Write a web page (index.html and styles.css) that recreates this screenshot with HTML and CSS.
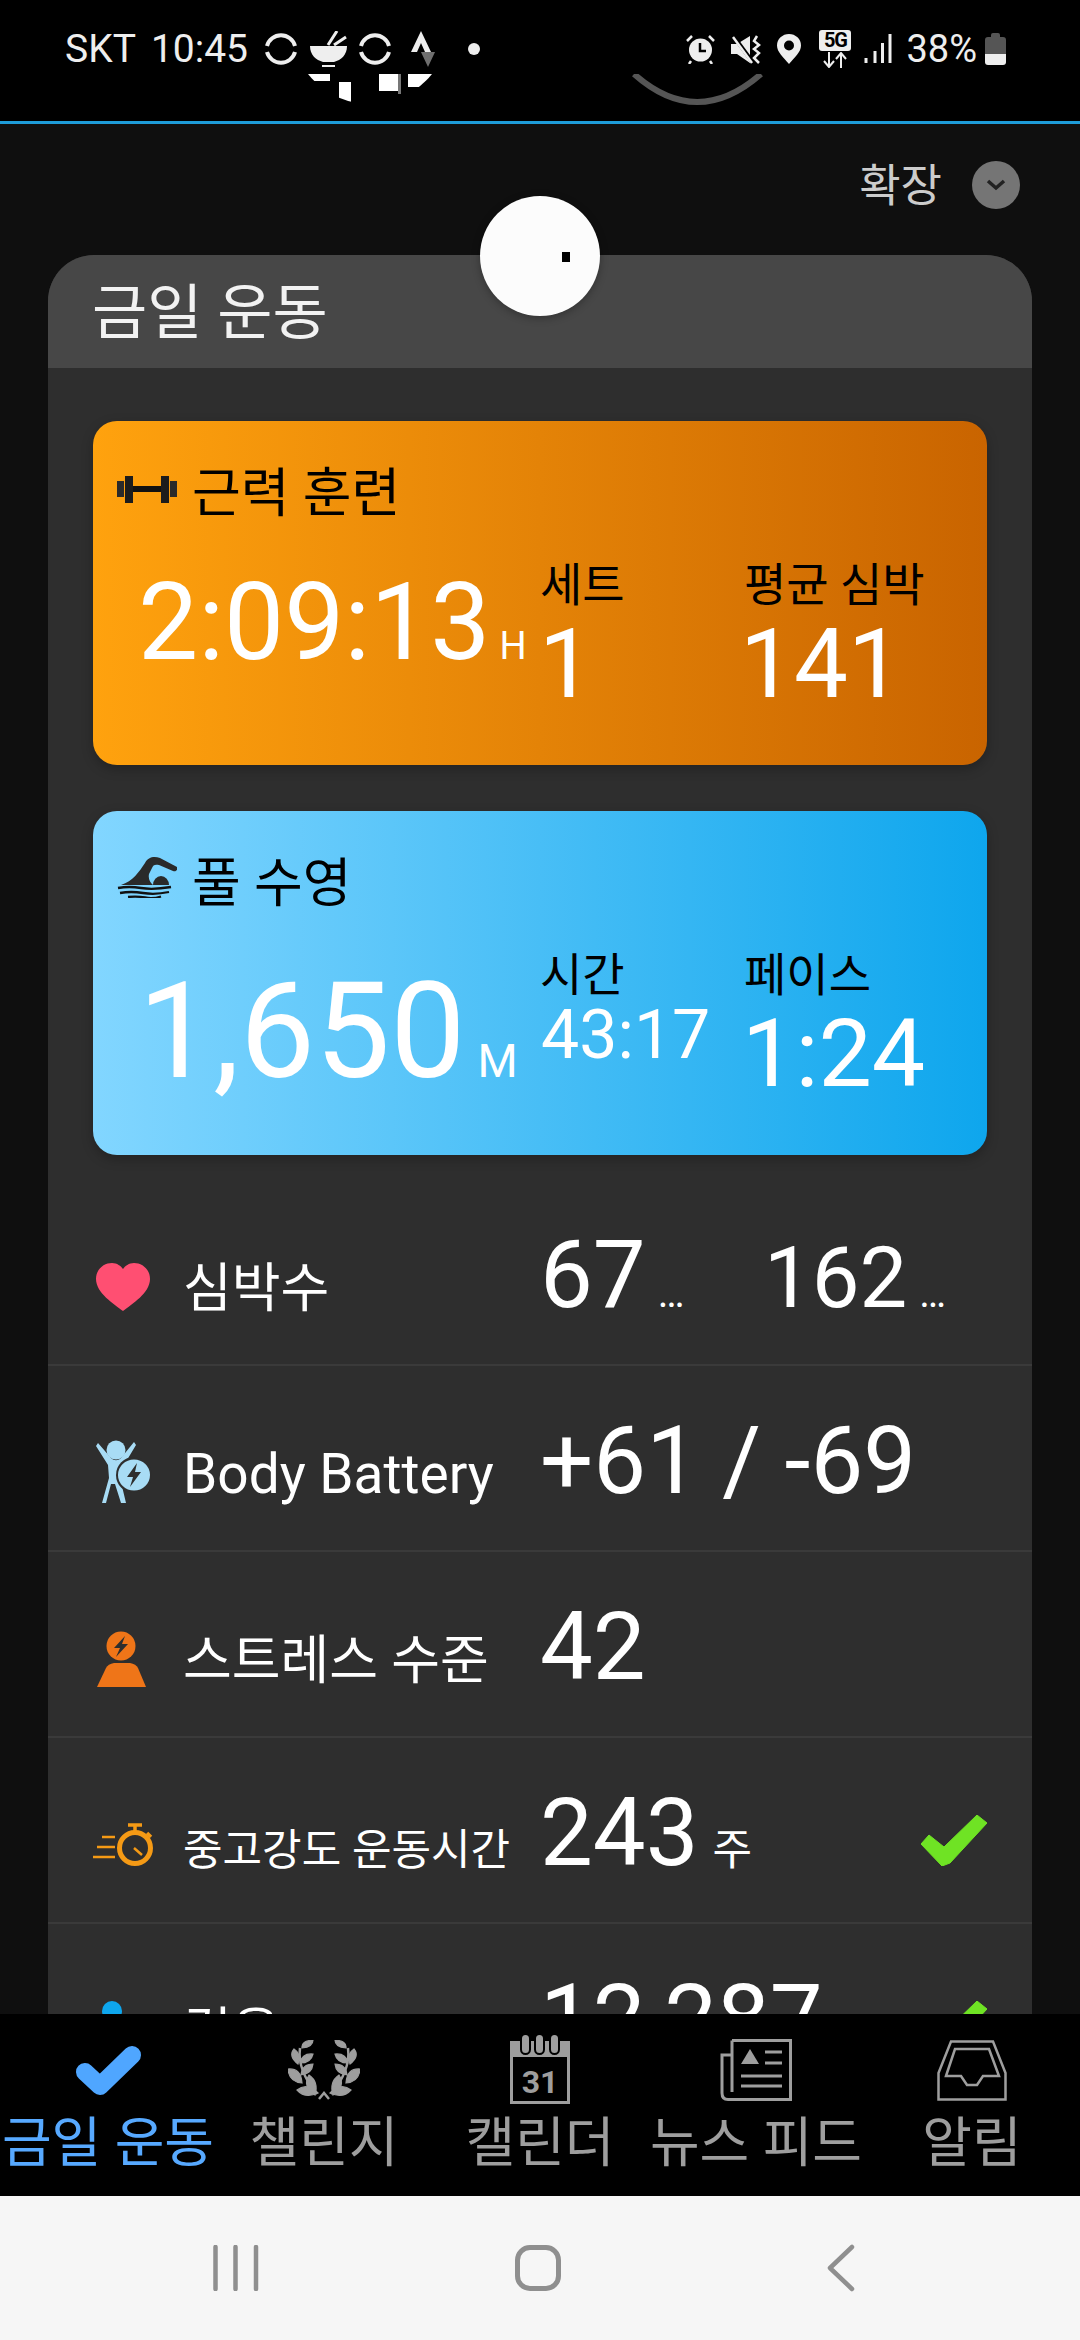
FILE: index.html
```html
<!DOCTYPE html>
<html lang="ko">
<head>
<meta charset="utf-8">
<title>금일 운동</title>
<link rel="stylesheet" href="styles.css">
</head>
<body>
<div class="page">
  <header class="statusbar">
    <div class="sb-left">
      <span class="sb-text">SKT</span>
      <span class="sb-text sb-time">10:45</span>
      <svg class="ic-sync" viewBox="0 0 32 32"><path d="M2 13A14.500 14.500 0 0 1 30 13M2 19A14.500 14.500 0 0 0 30 19" fill="none" stroke="#eee" stroke-width="4"/></svg>
      <svg class="ic-bowl" viewBox="0 0 37 36"><path d="M0 15H37C37 24 31 29 24 31H13C6 29 0 24 0 15Z" fill="#eee"/><path d="M12 35H25" stroke="#eee" stroke-width="2"/><path d="M18 14L27 0M24 14L36 6" stroke="#eee" stroke-width="3"/></svg>
      <svg class="ic-sync ic-sync2" viewBox="0 0 32 32"><path d="M2 13A14.500 14.500 0 0 1 30 13M2 19A14.500 14.500 0 0 0 30 19" fill="none" stroke="#eee" stroke-width="4"/></svg>
      <svg class="ic-strava" viewBox="0 0 24 36"><path d="M10 0L20 21H14L10 12L6 21H0Z" fill="#eee"/><path d="M10 21H24L17 36Z" fill="#6f6f6f"/></svg>
      <span class="sb-dot"></span>
    </div>
    <div class="sb-right">
      <svg class="ic-alarm" viewBox="0 0 29 30"><circle cx="14.500" cy="16" r="11.500" fill="#eee"/><path d="M14 9V17H20" fill="none" stroke="#000" stroke-width="2.500"/><path d="M1 7L6 2M28 7L23 2M5 27L3 30M24 27L26 30" stroke="#eee" stroke-width="2.500"/></svg>
      <svg class="ic-mute" viewBox="0 0 30 30"><path d="M0 10H6L19 2V29L6 20H0Z" fill="#eee"/><path d="M1 0L23 30" stroke="#000" stroke-width="4"/><path d="M2 3L21 29" stroke="#eee" stroke-width="2.500"/><path d="M26 2L23 7L28 11L23 15L28 19L23 24L28 29" fill="none" stroke="#eee" stroke-width="2.500"/></svg>
      <svg class="ic-pin" viewBox="0 0 24 30"><path d="M12 30C6 23 0 18 0 11.500A12 11.500 0 0 1 24 11.500C24 18 18 23 12 30Z" fill="#eee"/><circle cx="12" cy="11.500" r="5" fill="#000"/></svg>
      <div class="ic-5g">
        <span class="ic-5g-label">5G</span>
        <svg class="ic-5g-arrows" viewBox="0 0 32 16"><path d="M10 0V14M5 9L10 15L15 9M22 16V2M17 7L22 1L27 7" fill="none" stroke="#eee" stroke-width="2"/></svg>
      </div>
      <svg class="ic-signal" viewBox="0 0 28 30"><path d="M2 24V29M11 17V29M18.500 9V29M26 0V29" stroke="#eee" stroke-width="3"/></svg>
      <span class="sb-text sb-batt">38%</span>
      <svg class="ic-battery" viewBox="0 0 21 32"><path d="M6 4V2Q6 0 8 0H13Q15 0 15 2V4H18Q21 4 21 7V21H0V7Q0 4 3 4Z" fill="#555"/><path d="M0 21H21V29Q21 32 18 32H3Q0 32 0 29Z" fill="#eee"/></svg>
    </div>
    <svg class="glitch-disc" viewBox="0 0 124 30">
      <defs><clipPath id="discClip"><circle cx="62" cy="-49" r="79"/></clipPath></defs>
      <g clip-path="url(#discClip)" fill="#fff">
        <rect x="0" y="0" width="22" height="7"/>
        <rect x="31" y="8" width="12" height="22"/>
        <rect x="71" y="0" width="19" height="17"/>
        <rect x="90" y="0" width="3" height="20" fill="#777"/>
        <rect x="100" y="0" width="24" height="13"/>
      </g>
    </svg>
    <svg class="glitch-arc" viewBox="0 0 133 32"><path d="M3 0Q66 56 130 0" fill="none" stroke="#555" stroke-width="6"/></svg>
  </header>

  <main class="main">
    <div class="expand">
      <span class="expand-label">확장</span>
      <span class="expand-btn"><svg class="expand-chev" viewBox="0 0 20 12"><path d="M2 2L10 9L18 2" fill="none" stroke="#222" stroke-width="3.500"/></svg></span>
    </div>

    <section class="card">
      <span class="bubble"><span class="bubble-dot"></span></span>
      <h1 class="card-head">금일 운동</h1>
      <div class="card-body">
        <article class="workout workout-orange">
          <div class="workout-title">
            <svg class="ic-workout" viewBox="0 0 60 27"><path d="M0 5H7V21H0ZM53 5H60V21H53Z" fill="#2a2a2a"/><path d="M8 0H16V27H8ZM44 0H52V27H44Z" fill="#1c1c1c"/><path d="M16 10H44V16H16Z" fill="#111"/></svg>
            <span>근력 훈련</span>
          </div>
          <div class="workout-stats">
            <div class="big big-time"><span class="big-num">2:09:13</span><span class="big-unit">H</span></div>
            <div class="stat stat-a"><div class="stat-label">세트</div><div class="stat-value">1</div></div>
            <div class="stat stat-b"><div class="stat-label">평균 심박</div><div class="stat-value">141</div></div>
          </div>
        </article>

        <article class="workout workout-blue">
          <div class="workout-title">
            <svg class="ic-workout" viewBox="0 0 60 41"><path d="M4 28C16 24 22 15 28 6C31 0 37 -1 43 1L60 10C61 13 59 15 56 14L42 8C38 7 36 8 35 11L32 17C31 22 33 25 36 28Z" fill="#2a2a2a"/><path d="M36 28A8 9 0 0 1 52 28Z" fill="#2a2a2a"/><path d="M1 31Q12 29 24 31T54 30M3 36Q14 34 26 36T52 35M11 40Q20 39 28 40.500T44 39.500" fill="none" stroke="#111" stroke-width="2.300"/></svg>
            <span>풀 수영</span>
          </div>
          <div class="workout-stats">
            <div class="big big-dist"><span class="big-num">1,650</span><span class="big-unit">M</span></div>
            <div class="stat stat-a"><div class="stat-label">시간</div><div class="stat-value stat-value-small">43:17</div></div>
            <div class="stat stat-b"><div class="stat-label">페이스</div><div class="stat-value stat-value-pace">1:24</div></div>
          </div>
        </article>

        <div class="rows">
          <div class="row">
            <svg class="row-icon" viewBox="0 0 93 70"><path d="M33 59C24 52 6 41 6 27C6 17 14 11 22 11C27 11 31 14 33 17C35 14 39 11 44 11C52 11 60 17 60 27C60 41 42 52 33 59Z" fill="#ff4f72"/></svg>
            <span class="row-label">심박수</span>
            <span class="row-value row-value-first">67<span class="row-unit">…</span></span>
            <span class="row-value row-value-second">162<span class="row-unit">…</span></span>
          </div>
          <div class="row">
            <svg class="row-icon" viewBox="0 0 93 70"><circle cx="26" cy="12" r="9.500" fill="#a8dcf5"/><path d="M6 8L8 5L21 20C24 23 28 23 31 20L44 4L46 7L34 27L31 44L36 65H31L25 46L21 46L16 65H12L19 40L18 27Z" fill="#a8dcf5"/><circle cx="44" cy="37" r="18" fill="#2e2e2e"/><ellipse cx="44" cy="37" rx="16" ry="15.500" fill="#a8dcf5"/><path d="M47 25L37 39H43L40 49L51 34H45Z" fill="#2e2e2e"/></svg>
            <span class="row-label row-label-latin">Body Battery</span>
            <span class="row-value">+61 / -69</span>
          </div>
          <div class="row">
            <svg class="row-icon" viewBox="0 0 93 70"><circle cx="31" cy="22" r="14.500" fill="#ef7518"/><path d="M35 12L24 24H30L26 33L38 20H32Z" fill="#2e2e2e"/><path d="M7 63L16 44Q18 40 24 39H40Q46 40 48 44L56 63Z" fill="#ef7518"/></svg>
            <span class="row-label">스트레스 수준</span>
            <span class="row-value">42</span>
          </div>
          <div class="row">
            <svg class="row-icon" viewBox="0 0 93 70"><circle cx="45" cy="38" r="15.500" fill="none" stroke="#f59a15" stroke-width="5"/><path d="M38 15H52M45 15V23M57 23L61 27" stroke="#f59a15" stroke-width="3.500"/><path d="M44 38L52 45M12 27H25M7 37H25M3 47H25" stroke="#f59a15" stroke-width="2.500"/></svg>
            <span class="row-label row-label-small">중고강도 운동시간</span>
            <span class="row-value">243<span class="row-unit-word">주</span></span>
            <svg class="row-check" viewBox="0 0 66 51"><path d="M8 20L23 32L56 0L66 8L29 48L21 51L0 29Z" fill="#6fe324" stroke="#6fe324" stroke-linejoin="round"/></svg>
          </div>
          <div class="row">
            <svg class="row-icon" viewBox="0 0 93 70"><circle cx="22" cy="15" r="10" fill="#0ea6ed"/><path d="M12 28H32V70H12Z" fill="#0ea6ed"/></svg>
            <span class="row-label">걸음</span>
            <span class="row-value">12,287</span>
            <svg class="row-check" viewBox="0 0 66 51"><path d="M8 20L23 32L56 0L66 8L29 48L21 51L0 29Z" fill="#6fe324" stroke="#6fe324" stroke-linejoin="round"/></svg>
          </div>
        </div>
      </div>
    </section>
  </main>

  <nav class="tabbar">
    <div class="tab tab-active">
      <div class="tab-icon"><svg class="ic-tab-check" viewBox="0 0 67 51"><path d="M10 27L25 41L57 10" fill="none" stroke="#4fa6ff" stroke-width="18" stroke-linecap="round" stroke-linejoin="round"/></svg></div>
      <span class="tab-label">금일 운동</span>
    </div>
    <div class="tab">
      <div class="tab-icon"><svg class="ic-laurel" viewBox="0 0 72 60">
        <g id="laurelHalf" fill="#9e9e9e" stroke="#9e9e9e" stroke-width="1.200">
          <path d="M14 8Q13 1 25 0Q25 7 14 8Z"/>
          <path d="M10 24Q0 16 6 9Q14 14 10 24Z"/>
          <path d="M12 23Q14 13 25 14Q23 23 12 23Z"/>
          <path d="M14 43Q1 42 0 29Q13 28 14 43Z"/>
          <path d="M13 35Q14 24 25 24Q24 34 13 35Z"/>
          <path d="M30 53Q17 59 9 50Q19 42 30 53Z"/>
          <path d="M27 55Q14 46 21 35Q31 42 27 55Z"/>
          <path d="M12 8Q9 30 29 54" fill="none" stroke-width="2.500"/>
        </g>
        <use href="#laurelHalf" transform="matrix(-1 0 0 1 72 0)"/>
        <path d="M31 59L36 53L41 59" fill="none" stroke="#9e9e9e" stroke-width="2.500"/>
      </svg></div>
      <span class="tab-label">챌린지</span>
    </div>
    <div class="tab">
      <div class="tab-icon"><svg class="ic-calendar" viewBox="0 0 60 71">
        <path d="M0 8H60V24H0Z" fill="#9e9e9e"/>
        <path d="M1.500 22H58.500V69.500H1.500Z" fill="none" stroke="#9e9e9e" stroke-width="3"/>
        <g fill="#9e9e9e" stroke="#000" stroke-width="2"><rect x="11" y="1" width="9" height="20" rx="4.500"/><rect x="25" y="1" width="9" height="20" rx="4.500"/><rect x="40" y="1" width="9" height="20" rx="4.500"/></g>
        <text class="cal-num" x="30" y="60" text-anchor="middle">31</text>
      </svg></div>
      <span class="tab-label">캘린더</span>
    </div>
    <div class="tab">
      <div class="tab-icon"><svg class="ic-news" viewBox="0 0 72 62">
        <path d="M12 1.500H70.500V60.500H8Q2 60.500 2 54V16H12M12 1.500V53" fill="none" stroke="#9e9e9e" stroke-width="3"/>
        <path d="M30 10L39 25H21Z" fill="#9e9e9e"/>
        <path d="M45 13H62M45 24H62M21 37H62M21 47H62" stroke="#9e9e9e" stroke-width="3"/>
      </svg></div>
      <span class="tab-label">뉴스 피드</span>
    </div>
    <div class="tab">
      <div class="tab-icon"><svg class="ic-inbox" viewBox="0 0 70 61">
        <path d="M1.500 59.500V33L14 1.500H56L68.500 33V59.500Z" fill="none" stroke="#9e9e9e" stroke-width="2.500"/>
        <path d="M9 36L18 9H52L62 36H46L40 45H30L24 36Z" fill="none" stroke="#9e9e9e" stroke-width="2.500"/>
      </svg></div>
      <span class="tab-label">알림</span>
    </div>
  </nav>

  <footer class="navbar">
    <svg class="nav-recents" viewBox="0 0 46 46"><path d="M2.500 2V44M22.500 2V44M43 2V44" stroke="#8f8f8f" stroke-width="4.500" stroke-linecap="round"/></svg>
    <span class="nav-home"></span>
    <svg class="nav-back" viewBox="0 0 28 48"><path d="M25 3L3 24L25 45" fill="none" stroke="#8f8f8f" stroke-width="4.500" stroke-linecap="round" stroke-linejoin="round"/></svg>
  </footer>
</div>
</body>
</html>
```

FILE: styles.css
```css
* { box-sizing: border-box; }
html, body { margin: 0; padding: 0; background: #000; }
body { font-family: Roboto, "Noto Sans CJK KR", sans-serif; color: #fff; }

.page { width: 1080px; height: 2340px; display: flex; flex-direction: column; overflow: hidden; }

/* status bar */
.statusbar { position: relative; flex: 0 0 124px; background: #000; border-bottom: 3px solid #1e9cd8; display: flex; justify-content: space-between; align-items: flex-start; padding: 29px 74px 0 65px; }
.sb-left, .sb-right { display: flex; align-items: center; height: 40px; }
.sb-text { font-size: 39px; line-height: 40px; color: #eee; }
.sb-time { margin-left: 15px; }
.ic-sync { width: 32px; height: 32px; margin-left: 17px; }
.ic-sync2 { margin-left: 12px; }
.ic-bowl { width: 37px; height: 36px; margin-left: 13px; }
.ic-strava { width: 24px; height: 36px; margin-left: 20px; }
.sb-dot { width: 12px; height: 12px; margin-left: 33px; border-radius: 50%; background: #eee; }
.ic-alarm { width: 29px; height: 30px; }
.ic-mute { width: 30px; height: 30px; margin-left: 16px; }
.ic-pin { width: 24px; height: 30px; margin-left: 16px; }
.ic-5g { width: 32px; height: 38px; margin-left: 18px; display: flex; flex-direction: column; align-items: center; }
.ic-5g-label { width: 32px; height: 21px; background: #eee; color: #000; border-radius: 3px; font-size: 20px; line-height: 21px; font-weight: 700; text-align: center; letter-spacing: -1px; }
.ic-5g-arrows { width: 32px; height: 16px; margin-top: 1px; }
.ic-signal { width: 28px; height: 30px; margin-left: 13px; }
.sb-batt { margin-left: 14px; font-size: 38px; }
.ic-battery { width: 21px; height: 32px; margin-left: 8px; }
.glitch-disc { position: absolute; left: 308px; top: 74px; width: 124px; height: 30px; }
.glitch-arc { position: absolute; left: 631px; top: 74px; width: 133px; height: 32px; }

/* main */
.main { flex: 1 1 0; min-height: 0; overflow: hidden; background: #0f0f0f; }
.expand { height: 131px; display: flex; align-items: flex-start; justify-content: flex-end; padding: 37px 60px 0 0; }
.expand-label { margin-top: 2px; font-size: 45px; line-height: 48px; color: #ccc; }
.expand-btn { width: 48px; height: 48px; margin-left: 30px; border-radius: 50%; background: #757575; display: flex; align-items: center; justify-content: center; }
.expand-chev { width: 20px; height: 12px; }

.card { position: relative; margin: 0 48px; background: #2e2e2e; border-radius: 46px 46px 0 0; }
.bubble { position: absolute; left: 432px; top: -59px; width: 120px; height: 120px; border-radius: 50%; background: #fcfcfc; box-shadow: 0 2px 8px rgba(0,0,0,.3); }
.bubble-dot { position: absolute; left: 82px; top: 56px; width: 8px; height: 10px; background: #000; }
.card-head { margin: 0; height: 113px; padding-left: 44px; background: #474747; border-radius: 46px 46px 0 0; font-size: 60px; line-height: 118px; font-weight: 400; color: #f2f2f2; }
.card-body { padding: 53px 45px 0; }

/* workout cards */
.workout { height: 344px; border-radius: 24px; box-shadow: 0 4px 12px rgba(0,0,0,.25); }
.workout + .workout { margin-top: 46px; }
.workout-orange { background: linear-gradient(90deg, #ffa20e, #c96400); }
.workout-blue { background: linear-gradient(90deg, #82d6ff, #0ea6ed); }
.workout-title { height: 137px; padding: 43px 0 0 24px; display: flex; align-items: flex-start; color: #000; font-size: 53px; line-height: 60px; }
.ic-workout { width: 60px; height: 41px; margin: 3px 15px 0 0; }
.workout-orange .ic-workout { height: 27px; margin-top: 12px; }
.workout-stats { display: flex; align-items: flex-start; }
.big { flex: 0 0 449px; padding-left: 45px; display: flex; align-items: baseline; white-space: nowrap; }
.big-time { margin-top: 11px; }
.big-dist { margin-top: 17px; }
.big-time .big-num { font-size: 107px; line-height: 107px; }
.big-dist .big-num { font-size: 134px; line-height: 134px; }
.big-unit { font-size: 38px; margin-left: 9px; }
.big-dist .big-unit { font-size: 46px; margin-left: 12px; }
.stat { white-space: nowrap; }
.stat-a { flex: 0 0 201px; }
.stat-label { margin: 2px 0 0 -2px; color: #000; font-size: 46px; line-height: 50px; }
.stat-b .stat-label { margin-left: 1px; }
.stat-value { margin: 6px 0 0 -3px; font-size: 96px; line-height: 96px; }
.stat-value-pace { margin-left: -1px; font-size: 95px; }
.stat-value-small { margin: 1px 0 0 -1px; font-size: 68px; line-height: 68px; }

/* rows */
.rows { margin: 25px -45px 0; }
.row { height: 186px; padding: 48px 45px 0 42px; border-bottom: 2px solid #3a3a3a; display: flex; align-items: baseline; }
.row-icon { flex: 0 0 93px; width: 93px; height: 70px; align-self: flex-start; margin-top: 24px; }
.row-label { flex: 0 0 357px; font-size: 53px; line-height: 60px; white-space: nowrap; }
.row-label-latin { font-size: 55px; }
.row-label-small { font-size: 43px; }
.row-value { font-size: 94px; line-height: 94px; white-space: nowrap; }
.row-value-first { flex: 0 0 224px; }
.row-value-second { font-size: 85px; }
.row-unit { font-size: 40px; margin-left: 12px; }
.row-unit-word { font-size: 43px; margin-left: 14px; }
.row-check { width: 66px; height: 51px; margin-left: auto; align-self: flex-start; margin-top: 29px; }

/* tab bar */
.tabbar { flex: 0 0 182px; background: #000; display: flex; padding-top: 18px; }
.tab { flex: 0 0 216px; display: flex; flex-direction: column; align-items: center; color: #9e9e9e; }
.tab-active { color: #57a9ff; }
.tab-icon { height: 72px; display: flex; align-items: center; justify-content: center; }
.tab-label { margin-top: 10px; font-size: 54px; line-height: 60px; white-space: nowrap; }
.ic-tab-check { width: 67px; height: 51px; margin-top: 4px; }
.ic-laurel { width: 72px; height: 60px; margin-top: 4px; }
.ic-calendar { width: 60px; height: 71px; }
.ic-news { width: 72px; height: 62px; margin-top: 4px; }
.ic-inbox { width: 70px; height: 61px; margin-top: 5px; }
.cal-num { font-family: Roboto, sans-serif; font-size: 32px; font-weight: 700; fill: #9e9e9e; }

/* nav bar */
.navbar { flex: 0 0 144px; background: #f6f6f6; display: flex; align-items: center; position: relative; padding-left: 213px; }
.nav-recents { width: 46px; height: 46px; }
.nav-home { width: 46px; height: 46px; margin-left: 256px; border: 5px solid #8f8f8f; border-radius: 15px; }
.nav-back { width: 28px; height: 48px; margin-left: 266px; }
```
